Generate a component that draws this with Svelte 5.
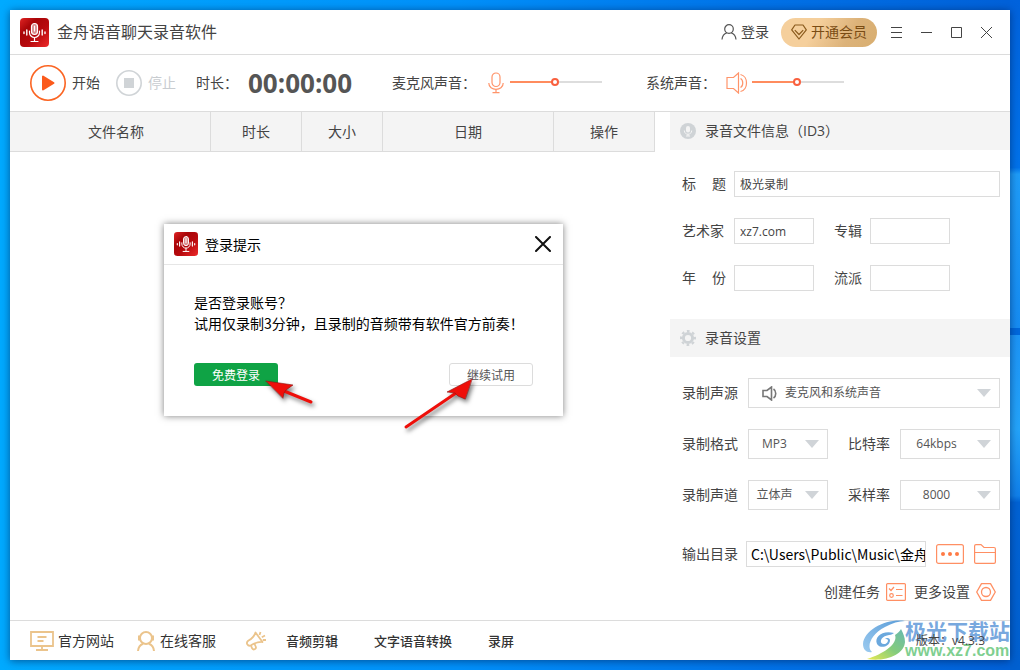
<script>
    let micVolume = 49;
    let systemVolume = 49;
    let showLogin = true;

    let info = { title: "极光录制", artist: "xz7.com", album: "", year: "", genre: "" };
    let outputDir = "C:\\Users\\Public\\Music\\金舟语音聊天录音软件";

    const columns = ["文件名称", "时长", "大小", "日期", "操作"];
    const sources = ["麦克风和系统声音", "仅麦克风", "仅系统声音"];
    const formats = ["MP3", "WAV"];
    const bitrates = ["64kbps", "128kbps"];
    const channels = ["立体声", "单声道"];
    const sampleRates = ["8000", "44100"];
</script>

{#snippet logo()}
    <svg class="logo" viewBox="0 0 29 29" aria-hidden="true">
        <defs>
            <linearGradient id="logoRed" x1="0" y1="0" x2="1" y2="1">
                <stop offset="0" stop-color="#e02424" />
                <stop offset="0.3" stop-color="#a80508" />
                <stop offset="0.6" stop-color="#b80a0e" />
                <stop offset="1" stop-color="#ee2a2a" />
            </linearGradient>
        </defs>
        <rect width="29" height="29" rx="4" fill="url(#logoRed)" />
        <g fill="none" stroke="#fff" stroke-linecap="round">
            <rect x="11.5" y="5.5" width="6" height="11" rx="3" fill="#d98b8b" stroke-width="1.2" />
            <path d="M14.5 8v5M9.5 13v1.5a5 5 0 0 0 10 0V13M14.5 19.5V23M11 23.5h7" stroke-width="1.2" />
            <path d="M4 14v1.5M6.8 12v5M22.2 12v5M25 14v1.5" stroke-width="1.4" />
        </g>
    </svg>
{/snippet}

{#snippet arrow()}
    <svg class="caret" width="14" height="8" viewBox="0 0 14 8" aria-hidden="true">
        <path d="M0 0h14L7 8z" fill="#d0d4d8" />
    </svg>
{/snippet}

<div class="desktop">
    <main class="window">
        <header class="titlebar">
            {@render logo()}
            <h1>金舟语音聊天录音软件</h1>
            <button class="login">
                <svg width="16" height="16" viewBox="0 0 16 16" fill="none" stroke="#555" stroke-width="1.2">
                    <circle cx="8" cy="5" r="4.3" />
                    <path d="M1 15.5c.3-3.5 2.5-6 5-6.8M15 15.5c-.3-3.5-2.5-6-5-6.8" />
                </svg>
                登录
            </button>
            <button class="vip">
                <svg width="16" height="16" viewBox="0 0 16 16" fill="none" stroke="#8a5a1c" stroke-width="1.2" stroke-linejoin="round">
                    <path d="M4 1h8l3.3 4.8L8 15 .7 5.8z" />
                    <path d="M3.8 6.2L8 10.5l4.2-4.3" />
                </svg>
                开通会员
            </button>
            <nav class="controls">
                <button aria-label="菜单">
                    <svg width="13" height="13" viewBox="0 0 13 13"><path d="M1 1.5h11M1 6.5h11M1 11.5h11" /></svg>
                </button>
                <button aria-label="最小化">
                    <svg width="13" height="13" viewBox="0 0 13 13"><path d="M1 6.5h11" /></svg>
                </button>
                <button aria-label="最大化">
                    <svg width="13" height="13" viewBox="0 0 13 13"><path d="M1.5 1.5h10v10h-10z" /></svg>
                </button>
                <button aria-label="关闭">
                    <svg width="13" height="13" viewBox="0 0 13 13"><path d="M1 1l11 11M12 1L1 12" /></svg>
                </button>
            </nav>
        </header>

        <section class="toolbar">
            <button class="start">
                <svg width="36" height="36" viewBox="0 0 36 36">
                    <circle cx="18" cy="18" r="17.2" fill="none" stroke="#fb6422" stroke-width="1.6" />
                    <path d="M13 11.5v13l10.5-6.5z" fill="#fb5a1c" stroke="#fb5a1c" stroke-width="2" stroke-linejoin="round" />
                </svg>
                开始
            </button>
            <button class="stop" disabled>
                <svg width="26" height="26" viewBox="0 0 26 26">
                    <circle cx="13" cy="13" r="12.2" fill="none" stroke="#d0d4d7" stroke-width="1.6" />
                    <rect x="8" y="8" width="10" height="10" fill="#d0d4d7" />
                </svg>
                停止
            </button>
            <span class="duration">时长：</span>
            <time class="timer">00:00:00</time>

            <div class="volume mic">
                <label for="mic">麦克风声音：</label>
                <svg width="16" height="22" viewBox="0 0 16 22" fill="none" stroke="#ff946a" stroke-width="1.2">
                    <rect x="4" y="1" width="8" height="13.5" rx="4" />
                    <path d="M.8 11c0 8.5 14.4 8.5 14.4 0M8 17.5v3M4.5 20.7h7" />
                </svg>
                <input id="mic" type="range" bind:value={micVolume} style="--level: {micVolume}%" />
            </div>
            <div class="volume">
                <label for="system">系统声音：</label>
                <svg width="22" height="22" viewBox="0 0 22 22" fill="none" stroke="#ff946a" stroke-width="1.2">
                    <path d="M1 5.5h6.5L12.5 1v20l-5-4.5H1z" />
                    <path d="M14.5 6.5c3 1.5 3 7.5 0 9M14.5 2.5c8 1.5 8 15.5 0 17" />
                </svg>
                <input id="system" type="range" bind:value={systemVolume} style="--level: {systemVolume}%" />
            </div>
        </section>

        <div class="content">
            <section class="files">
                <table>
                    <thead>
                        <tr>
                            {#each columns as column}
                                <th>{column}</th>
                            {/each}
                        </tr>
                    </thead>
                </table>
            </section>

            <aside class="side">
                <h2>
                    <svg width="16" height="16" viewBox="0 0 16 16">
                        <circle cx="8" cy="8" r="8" fill="#cfd3d6" />
                        <rect x="6" y="3" width="4" height="6.5" rx="2" fill="#f4f4f4" />
                        <path d="M4.3 7.5c0 5 7.4 5 7.4 0M8 11v2M6 13h4" fill="none" stroke="#f4f4f4" />
                    </svg>
                    录音文件信息（ID3）
                </h2>
                <form class="info">
                    <label class="spread" for="title">标 题</label>
                    <input id="title" class="wide" bind:value={info.title} />
                    <label for="artist">艺术家</label>
                    <input id="artist" bind:value={info.artist} />
                    <label class="second" for="album">专辑</label>
                    <input id="album" bind:value={info.album} />
                    <label class="spread" for="year">年 份</label>
                    <input id="year" bind:value={info.year} />
                    <label class="second" for="genre">流派</label>
                    <input id="genre" bind:value={info.genre} />
                </form>

                <h2>
                    <svg width="16" height="16" viewBox="0 0 16 16">
                        <circle cx="8" cy="8" r="4.6" fill="none" stroke="#cfd3d6" stroke-width="3" />
                        <circle cx="8" cy="8" r="7" fill="none" stroke="#cfd3d6" stroke-width="2" stroke-dasharray="2.75" stroke-dashoffset="1.37" />
                    </svg>
                    录音设置
                </h2>
                <form class="settings">
                    <label for="source">录制声源</label>
                    <div class="select source">
                        <svg class="speaker" width="15" height="15" viewBox="0 0 15 15" fill="none" stroke="#777" stroke-width="1.6">
                            <path d="M1 4.5h4L9.5 1v13L5 10.5H1z" />
                            <path d="M11.5 3c3 2 3 7 0 9" />
                        </svg>
                        <select id="source">
                            {#each sources as item}<option>{item}</option>{/each}
                        </select>
                        {@render arrow()}
                    </div>
                    <label for="format">录制格式</label>
                    <div class="select">
                        <select id="format">
                            {#each formats as item}<option>{item}</option>{/each}
                        </select>
                        {@render arrow()}
                    </div>
                    <label class="second" for="bitrate">比特率</label>
                    <div class="select">
                        <select id="bitrate">
                            {#each bitrates as item}<option>{item}</option>{/each}
                        </select>
                        {@render arrow()}
                    </div>
                    <label for="channel">录制声道</label>
                    <div class="select">
                        <select id="channel">
                            {#each channels as item}<option>{item}</option>{/each}
                        </select>
                        {@render arrow()}
                    </div>
                    <label class="second" for="rate">采样率</label>
                    <div class="select">
                        <select id="rate">
                            {#each sampleRates as item}<option>{item}</option>{/each}
                        </select>
                        {@render arrow()}
                    </div>
                </form>

                <div class="output">
                    <label for="output">输出目录</label>
                    <input id="output" bind:value={outputDir} />
                    <button aria-label="更改目录">
                        <svg width="28" height="20" viewBox="0 0 28 20">
                            <rect x=".6" y=".6" width="26.8" height="18.8" rx="2" fill="none" stroke="#ff8f63" stroke-width="1.2" />
                            <g fill="#ff7a45"><circle cx="7" cy="10" r="2" /><circle cx="14" cy="10" r="2" /><circle cx="21" cy="10" r="2" /></g>
                        </svg>
                    </button>
                    <button aria-label="打开目录">
                        <svg width="22" height="20" viewBox="0 0 22 20" fill="none" stroke="#ff8f63" stroke-width="1.2">
                            <path d="M.6 18V2C.6 1.2 1.2.6 2 .6h5L10 3.5h10c.8 0 1.4.6 1.4 1.4V18c0 .8-.6 1.4-1.4 1.4H2C1.2 19.4.6 18.8.6 18zM.6 8.5h20.8" />
                        </svg>
                    </button>
                </div>
                <div class="actions">
                    <button>
                        创建任务
                        <svg width="20" height="18" viewBox="0 0 20 18" fill="none" stroke="#ff8f63" stroke-width="1.2">
                            <rect x=".6" y=".6" width="18.8" height="16.8" rx="1" />
                            <path d="M3 5.5l2 2 3-3.5M10 6.5h6.5M10 12.5h6.5" />
                            <circle cx="5.5" cy="12.5" r="1.8" />
                        </svg>
                    </button>
                    <button>
                        更多设置
                        <svg width="20" height="18" viewBox="0 0 20 18" fill="none" stroke="#ff8f63" stroke-width="1.3">
                            <path d="M5.5.7h9L19.3 9l-4.8 8.3h-9L.7 9z" stroke-linejoin="round" />
                            <circle cx="10" cy="9" r="4.5" />
                        </svg>
                    </button>
                </div>
            </aside>
        </div>

        <footer>
            <a class="site" href="#site">
                <svg width="24" height="20" viewBox="0 0 24 20" fill="none" stroke="#ebc48c" stroke-width="1.8">
                    <path d="M1 1h22v14H1zM12 15v4M6 19h12M7.5 6h9M7.5 10h6" />
                </svg>
                官方网站
            </a>
            <a class="service" href="#service">
                <svg width="18" height="20" viewBox="0 0 18 20" fill="none" stroke="#ebc48c" stroke-width="2">
                    <circle cx="9" cy="7" r="6" />
                    <path d="M2 4.5v5M16 4.5v5M1 20c.4-4 2.8-6.5 5-7.3M17 20c-.4-4-2.8-6.5-5-7.3" />
                </svg>
                在线客服
            </a>
            <svg class="horn" width="20" height="20" viewBox="0 0 20 20" fill="none" stroke="#ebc48c" stroke-width="1.8" stroke-linejoin="round">
                <path d="M9.5 1.5L16.5 11c-4.5-.3-8 1-11.5 3.3-1.5.8-3 .2-3.7-1-.7-1.3-.3-2.6.9-3.5C6 7.5 8.5 5.5 9.5 1.5z" />
                <path d="M8.5 12.8l1.2 2.7a2 2 0 0 1-3.7 1.7l-1-2.7M13.5 4l1-3M15.8 6.2L19 4.5M16.8 9H20" />
            </svg>
            <a class="strong edit" href="#edit">音频剪辑</a>
            <a class="strong convert" href="#convert">文字语音转换</a>
            <a class="strong" href="#screen">录屏</a>
            <span class="version">版本：v4.3.3</span>

            <div class="watermark">
                <svg width="42" height="40" viewBox="0 0 42 40" aria-hidden="true">
                    <defs>
                        <linearGradient id="swirlBlue" x1="0" y1="1" x2="1" y2="0">
                            <stop offset="0" stop-color="#9ccbf0" />
                            <stop offset="1" stop-color="#5a9cd8" />
                        </linearGradient>
                        <linearGradient id="swirlGreen" x1="0" y1="1" x2="1" y2="0">
                            <stop offset="0" stop-color="#eaea50" />
                            <stop offset="0.5" stop-color="#84cc7c" />
                            <stop offset="1" stop-color="#67b8b0" />
                        </linearGradient>
                    </defs>
                    <path d="M42 1C25-2 1 9 0 24c0 6 4 9 9 8C3 27 8 14 22 7 29 3 36 1 42 1z" fill="url(#swirlBlue)" />
                    <path d="M31 13c-12-3-20 4-17 11 3 5 12 3 13-3 .5-3-3-4-5-2 5-1 3 5-1 5-5 0-4-7 3-8.5 3-.5 5-1 7-2.5z" fill="#6ba8dd" />
                    <path d="M38 9c-1 2-3 4-6 6 3 8-9 18-28 24 18 3 37-4 38-17 0-5-2-9-4-13z" fill="url(#swirlGreen)" />
                </svg>
                <p><b>极光下载站</b><span>www.xz7.com</span></p>
            </div>
        </footer>

        {#if showLogin}
            <div class="dialog" role="dialog" aria-labelledby="dialog-title">
                <div class="dialog-head">
                    {@render logo()}
                    <span id="dialog-title">登录提示</span>
                    <button aria-label="关闭" on:click={() => (showLogin = false)}>
                        <svg width="16" height="16" viewBox="0 0 16 16" stroke="#111" stroke-width="2" stroke-linecap="round">
                            <path d="M1 1l14 14M15 1L1 15" />
                        </svg>
                    </button>
                </div>
                <div class="dialog-body">
                    <p>是否登录账号？</p>
                    <p>试用仅录制3分钟，且录制的音频带有软件官方前奏！</p>
                    <div class="dialog-buttons">
                        <button class="free">免费登录</button>
                        <button class="trial">继续试用</button>
                    </div>
                </div>
                <svg class="pointers" viewBox="0 0 399 192" fill="#ee0f0a" stroke="#ee0f0a" stroke-linecap="round" aria-hidden="true">
                    <path d="M120 167l27 11M292 169l-50 34" stroke-width="3" />
                    <path d="M102 157l27 4-7 5-2 3-1 5z" stroke="#8c1210" stroke-width=".6" />
                    <path d="M308 155l-25 13 8 1 3 3 7 3z" stroke="#8c1210" stroke-width=".6" />
                </svg>
            </div>
        {/if}
    </main>
</div>

<style>
    :global(body) {
        margin: 0;
    }

    .desktop {
        box-sizing: border-box;
        display: flex;
        min-height: 100vh;
        padding: 10px;
        background:
            linear-gradient(#0062dc, #0072ea 25%, #1e9cf8 26%, #168cf2 49%, #0068dc 49%, #0068dc 50%, #1c94f6 50%, #24a4fa 64%, #1080ea 74%, #0062d4 75%, #0060d0) right / 10px 100% no-repeat,
            linear-gradient(90deg, #00aaff, #0090fa 45%, #0072e8 75%, #0060d8);
    }

    .window {
        position: relative;
        display: flex;
        flex: 1;
        flex-direction: column;
        min-width: 0;
        background: #fff;
        box-shadow: 0 1px 8px rgba(0, 30, 80, 0.6);
        color: #444;
        font-family: "Open Sans", "Noto Sans CJK SC", sans-serif;
        font-size: 14px;
        line-height: 20px;
    }

    button, input, select {
        box-sizing: border-box;
        margin: 0;
        padding: 0;
        border: 0;
        background: none;
        color: inherit;
        font: inherit;
    }

    button {
        display: flex;
        align-items: center;
        white-space: nowrap;
    }

    svg {
        display: block;
        flex: none;
    }

    h1, h2, p {
        margin: 0;
        font-weight: 400;
    }

    /* 标题栏 */
    .titlebar {
        display: flex;
        align-items: center;
        height: 44px;
        padding: 0 9px 0 10px;
        border-bottom: 1px solid #dcdcdc;
    }

    .titlebar .logo {
        width: 29px;
        height: 29px;
    }

    h1 {
        flex: 1;
        margin-left: 8px;
        font-size: 16px;
        line-height: 22px;
    }

    .login {
        gap: 4px;
    }

    .vip {
        gap: 4px;
        height: 29px;
        margin: 0 4px 0 12px;
        padding: 0 10px;
        border-radius: 15px;
        background: linear-gradient(120deg, #f5cf9c 35%, #dcb279 70%, #d8ae70);
        color: #7a4c14;
    }

    .controls {
        display: flex;
    }

    .controls button {
        justify-content: center;
        width: 30px;
        height: 30px;
    }

    .controls svg {
        fill: none;
        stroke: #444;
    }

    /* 工具栏 */
    .toolbar {
        display: flex;
        align-items: center;
        height: 56px;
        padding: 0 20px;
        border-bottom: 1px solid #dcdcdc;
        white-space: nowrap;
    }

    .start, .stop {
        gap: 6px;
        margin-right: 16px;
    }

    .stop {
        margin-right: 20px;
        color: #c8ccd0;
    }

    .timer {
        margin: 0 40px 0 10px;
        color: #555;
        font-size: 26px;
        font-weight: 700;
    }

    .volume {
        display: flex;
        align-items: center;
    }

    .volume svg {
        margin: 0 4px 0 10px;
    }

    .mic {
        margin-right: 44px;
    }

    .mic svg {
        margin: 0 6px 0 12px;
    }

    .volume input {
        width: 92px;
        height: 10px;
        margin-bottom: 3px;
        appearance: none;
        background: linear-gradient(90deg, #ff8c5e var(--level), #ddd var(--level)) center / 100% 2px no-repeat;
    }

    .volume input::-webkit-slider-thumb {
        box-sizing: border-box;
        width: 8px;
        height: 8px;
        appearance: none;
        border: 2px solid #f9603f;
        border-radius: 50%;
        background: #fff;
    }

    /* 主体 */
    .content {
        display: flex;
        flex: 1;
        gap: 15px;
    }

    .files {
        flex: 1;
    }

    table {
        width: 100%;
        border-collapse: separate;
        border-spacing: 0;
        table-layout: fixed;
    }

    th {
        box-sizing: border-box;
        height: 40px;
        padding: 0;
        border-right: 1px solid #dcdcdc;
        border-bottom: 1px solid #dcdcdc;
        background: #f4f4f4;
        font-weight: 400;
    }

    th:nth-child(1) {
        width: 201px;
        padding-left: 12px;
    }

    th:nth-child(2) {
        width: 91px;
    }

    th:nth-child(3) {
        width: 81px;
    }

    th:nth-child(5) {
        width: 101px;
    }

    .side {
        width: 340px;
    }

    h2 {
        display: flex;
        align-items: center;
        gap: 9px;
        height: 38px;
        padding-left: 10px;
        background: #f4f4f4;
        font-size: 14px;
    }

    .info, .settings {
        display: grid;
        align-items: center;
        row-gap: 21px;
        padding: 21px 10px 28px 12px;
    }

    .info {
        grid-template-columns: 52px 80px 56px 80px;
    }

    .spread {
        width: 44px;
        text-align-last: justify;
    }

    .second {
        padding-left: 20px;
    }

    .info input, .output input {
        height: 26px;
        padding: 0 5px;
        border: 1px solid #dcdcdc;
        background: #fff;
        font-size: 12px;
    }

    .info .wide {
        grid-column: 2 / -1;
        width: 266px;
    }

    .settings {
        grid-template-columns: 66px 80px 72px 1fr;
        padding-bottom: 31px;
    }

    .select {
        position: relative;
        display: flex;
        align-items: center;
        height: 30px;
        border: 1px solid #dcdcdc;
        box-sizing: border-box;
    }

    .source {
        grid-column: 2 / -1;
    }

    .speaker {
        margin: 0 8px 0 13px;
    }

    select {
        flex: 1;
        height: 28px;
        padding-right: 27px;
        appearance: none;
        color: #555;
        font-size: 12px;
        text-align: center;
        text-align-last: center;
    }

    .source select {
        text-align: left;
        text-align-last: left;
    }

    .caret {
        position: absolute;
        right: 8px;
        pointer-events: none;
    }

    .output {
        display: flex;
        align-items: center;
        gap: 10px;
        padding: 0 14px 0 12px;
    }

    .output label {
        width: 54px;
        white-space: nowrap;
    }

    .output input {
        flex: 1;
        min-width: 0;
        padding: 0 0 0 4px;
        color: #000;
        font-family: "Noto Sans CJK SC", sans-serif;
        font-size: 14px;
    }

    .actions {
        display: flex;
        justify-content: flex-end;
        gap: 8px;
        padding: 15px 14px 18px;
    }

    .actions button {
        gap: 6px;
    }

    /* 底栏 */
    footer {
        position: relative;
        display: flex;
        align-items: center;
        height: 39px;
        padding: 0 25px 0 20px;
        border-top: 1px solid #dcdcdc;
        white-space: nowrap;
    }

    footer a {
        display: flex;
        align-items: center;
        color: #333;
        text-decoration: none;
    }

    .site {
        gap: 4px;
        margin-right: 23px;
    }

    .service {
        gap: 5px;
        margin-right: 30px;
    }

    .horn {
        margin-right: 20px;
    }

    .strong {
        font-size: 13px;
        font-weight: 500;
    }

    .edit, .convert {
        margin-right: 36px;
    }

    .version {
        z-index: 1;
        margin-left: auto;
        font-size: 12px;
    }

    .watermark {
        position: absolute;
        right: 0;
        bottom: 0;
        display: flex;
        align-items: center;
    }

    .watermark p {
        display: flex;
        flex-direction: column;
    }

    .watermark b {
        color: #78a8de;
        font-size: 21px;
        line-height: 22px;
    }

    .watermark span {
        color: #7fcf90;
        font-family: "Liberation Sans", sans-serif;
        font-size: 16px;
        font-weight: 700;
        line-height: 18px;
    }

    /* 登录提示 */
    .dialog {
        position: absolute;
        top: 214px;
        left: 154px;
        width: 399px;
        background: #fff;
        box-shadow: 0 0 7px rgba(0, 0, 0, 0.5);
        color: #000;
        font-family: "Noto Sans CJK SC", sans-serif;
    }

    .dialog-head {
        display: flex;
        align-items: center;
        height: 40px;
        padding: 0 12px 0 10px;
        border-bottom: 1px solid #e6e6e6;
    }

    .dialog-head .logo {
        width: 24px;
        height: 24px;
    }

    .dialog-head span {
        flex: 1;
        margin-left: 7px;
    }

    .dialog-body {
        padding: 27px 30px 30px;
        line-height: 21px;
    }

    .dialog-body p {
        white-space: nowrap;
    }

    .dialog-buttons {
        display: flex;
        justify-content: space-between;
        margin-top: 29px;
    }

    .dialog-buttons button {
        justify-content: center;
        width: 84px;
        height: 23px;
        border-radius: 3px;
        font-size: 12px;
    }

    .free {
        background: #0fa345;
        color: #fff;
    }

    .dialog-buttons .trial {
        border: 1px solid #dcdcdc;
        color: #555;
    }

    .pointers {
        position: absolute;
        top: 0;
        left: 0;
        width: 399px;
        overflow: visible;
        filter: drop-shadow(2px 3px 2px rgba(0, 0, 0, 0.5));
        pointer-events: none;
    }
</style>
